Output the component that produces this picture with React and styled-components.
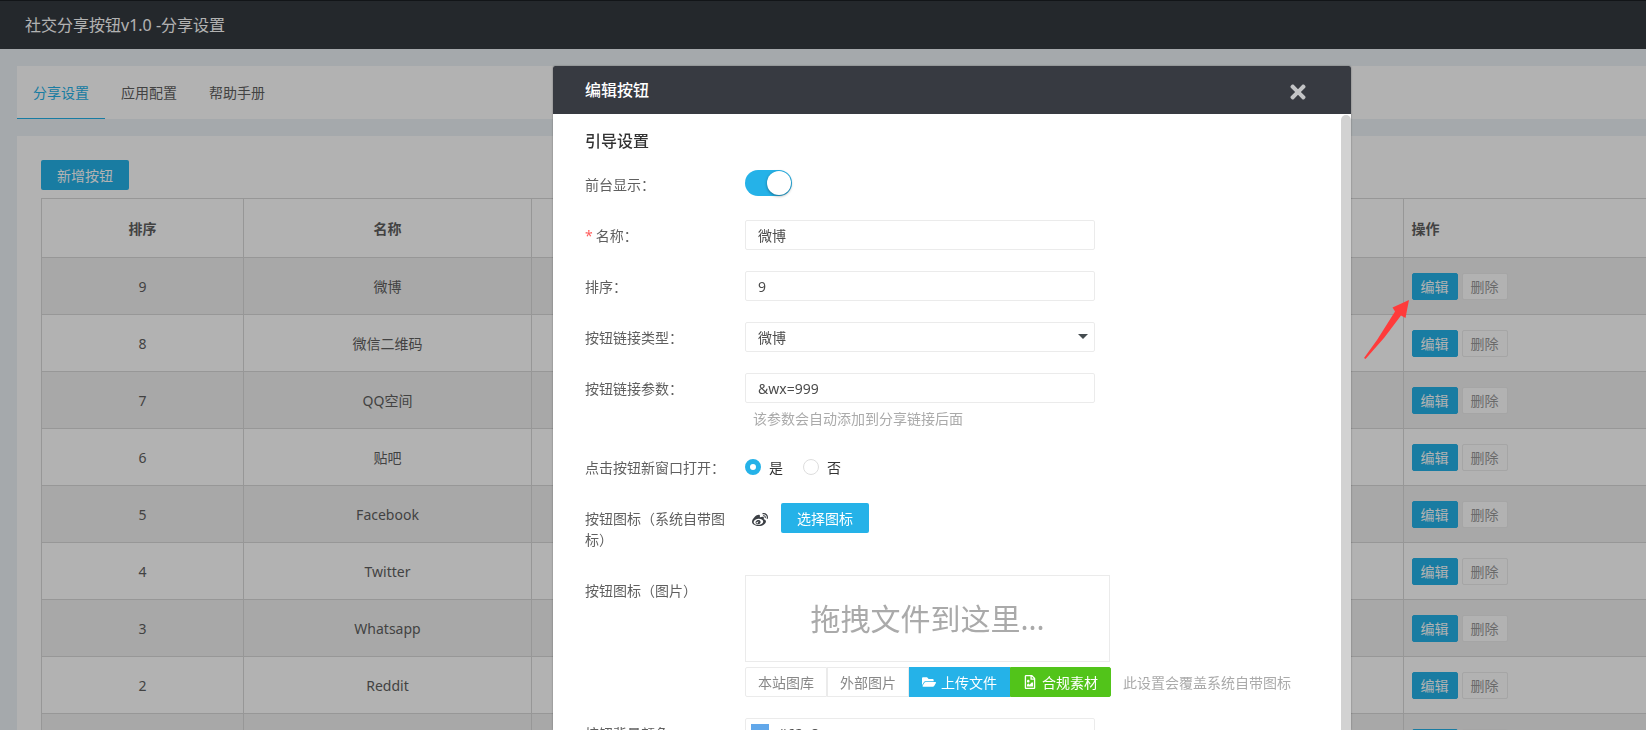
import React, { useState } from "react"
import styled, { createGlobalStyle } from "styled-components"
import { FaTimes, FaWeibo, FaFolderOpen, FaRegFileImage } from "react-icons/fa"

const GlobalStyle = createGlobalStyle`
  * {
    box-sizing: border-box;
  }

  body {
    margin: 0;
    overflow: hidden;
    background-color: #edf3f6;
    color: #5f5f5f;
    font-family: "Noto Sans", "Noto Sans CJK SC", sans-serif;
    font-size: 14px;
    line-height: 21px;
  }

  button,
  input,
  select {
    font-family: inherit;
    font-size: 14px;
  }
`

const Page = styled.div`
  height: 100vh;
  overflow: hidden;
`

const TopBar = styled.header`
  display: flex;
  align-items: center;
  height: 49px;
  padding: 0 25px;
  border-top: 1px solid #1b1f23;
  background-color: #343a40;
  color: #fff;
`

const TopTitle = styled.h1`
  margin: 0;
  font-size: 16px;
  font-weight: 400;
  line-height: 24px;
`

const Content = styled.main`
  padding: 17px 0 0 17px;
`

const Tabs = styled.nav`
  display: flex;
  height: 53px;
  margin-bottom: 17px;
  background-color: #fff;
`

const Tab = styled.a`
  display: flex;
  align-items: center;
  padding: 0 16px;
  border-bottom: 1px solid ${({ $active }) => ($active ? "#25b2e8" : "transparent")};
  color: ${({ $active }) => ($active ? "#25b2e8" : "#5f5f5f")};
  text-decoration: none;
`

const Card = styled.section`
  padding: 24px 0 24px 24px;
  background-color: #fff;
`

const Button = styled.button`
  height: 30px;
  padding: 0 16px;
  border: none;
  border-radius: 2px;
  background-color: #25b2e8;
  color: #fff;
  cursor: pointer;
`

const SmallButton = styled.button`
  height: 27px;
  padding: 0 8px;
  border: 1px solid ${({ $primary }) => ($primary ? "#25b2e8" : "#ececec")};
  border-radius: 2px;
  background-color: ${({ $primary }) => ($primary ? "#25b2e8" : "#fff")};
  color: ${({ $primary }) => ($primary ? "#fff" : "#999")};
  cursor: pointer;
`

const Table = styled.table`
  width: 100%;
  margin-top: 8px;
  border-collapse: collapse;
  table-layout: fixed;
`

const Col = styled.col`
  width: ${({ $width }) => $width || "auto"};
`

const Th = styled.th`
  height: 59px;
  padding: 0 8px;
  border: 1px solid #d8d8d8;
  border-right: none;
  font-weight: 700;
  text-align: ${({ $left }) => ($left ? "left" : "center")};
`

const Td = styled.td`
  height: 57px;
  padding: 0 8px;
  border: 1px solid #d8d8d8;
  border-right: none;
  text-align: center;
`

const Tr = styled.tr`
  &:nth-child(odd) {
    background-color: #f1f1f1;
  }
`

const Actions = styled.div`
  display: flex;
  gap: 4px;
`

const Overlay = styled.div`
  position: fixed;
  inset: 0;
  display: flex;
  justify-content: center;
  padding: 66px 0 0 258px;
  background-color: rgba(0, 0, 0, 0.3);
`

const Pointer = styled.svg`
  position: absolute;
  top: 300px;
  right: 237px;
`

const Modal = styled.section`
  display: flex;
  flex-direction: column;
  width: 798px;
  overflow: hidden;
  border-radius: 2px 2px 0 0;
  background-color: #fff;
  box-shadow: 0 0 2px rgba(0, 0, 0, 0.4);
`

const ModalHeader = styled.header`
  display: flex;
  flex-shrink: 0;
  align-items: center;
  justify-content: space-between;
  height: 48px;
  padding: 0 42px 0 32px;
  background-color: #373a41;
  color: #fff;
`

const ModalTitle = styled.h2`
  margin: 0;
  font-size: 16px;
  font-weight: 500;
  line-height: 24px;
`

const CloseButton = styled.button`
  display: flex;
  padding: 4px 0 0;
  border: none;
  background: none;
  color: #c3c4c6;
  cursor: pointer;
`

const ModalBody = styled.div`
  display: flex;
  flex: 1;
  min-height: 0;
  padding-top: 1px;
`

const Form = styled.form`
  flex: 1;
  padding: 14px 32px;
`

const ScrollBar = styled.div`
  width: 10px;
  border-radius: 5px 5px 0 0;
  background-color: #d2d2d2;
`

const SectionTitle = styled.h3`
  margin: 0 0 16px;
  color: #333;
  font-size: 16px;
  font-weight: 500;
  line-height: 24px;
`

const Row = styled.div`
  display: flex;
  align-items: flex-start;
  min-height: 30px;
  margin-bottom: 21px;
`

const Label = styled.label`
  flex-shrink: 0;
  width: 160px;
  padding: 5px 15px 4px 0;
`

const Required = styled.span`
  margin-right: 3px;
  color: #ff5c5c;
`

const Field = styled.div`
  flex: 1;
`

const Line = styled.div`
  display: flex;
  align-items: center;
  min-height: 30px;
`

const Input = styled.input`
  display: block;
  width: 350px;
  height: 30px;
  padding: 0 12px;
  border: 1px solid #ebebeb;
  border-radius: 2px;
  outline: none;
  background-color: #fff;
  color: #4c4c4c;
`

const SelectBox = styled.div`
  position: relative;
  width: 350px;

  &::after {
    content: "";
    position: absolute;
    top: 12px;
    right: 7px;
    border: 5px solid transparent;
    border-top-color: #454c50;
    border-bottom: none;
    pointer-events: none;
  }
`

const Select = styled.select`
  display: block;
  width: 100%;
  height: 30px;
  padding: 0 12px;
  border: 1px solid #ebebeb;
  border-radius: 2px;
  outline: none;
  background-color: #fff;
  color: #4c4c4c;
  appearance: none;
`

const Hint = styled.p`
  margin: 5px 8px 2px;
  color: #aaa;
`

const SideHint = styled.span`
  margin-left: 12px;
  color: #aaa;
`

const Switch = styled.input`
  display: block;
  width: 47px;
  height: 26px;
  margin: 1px 0 0;
  padding: 1px;
  border-radius: 13px;
  background-color: ${({ checked }) => (checked ? "#25b2e8" : "#ddd")};
  appearance: none;
  cursor: pointer;

  &::before {
    content: "";
    display: block;
    width: 24px;
    height: 24px;
    margin-left: ${({ checked }) => (checked ? "21px" : "0")};
    border-radius: 50%;
    background-color: #fff;
    box-shadow: 0 1px 3px rgba(0, 0, 0, 0.4);
  }
`

const RadioLabel = styled.label`
  display: flex;
  align-items: center;
  gap: 8px;
  margin-right: 20px;
  color: #333;
`

const Radio = styled.input`
  width: 16px;
  height: 16px;
  margin: 0;
  border: 1px solid #ddd;
  border-radius: 50%;
  background-color: #fff;
  appearance: none;

  &:checked {
    border: 5px solid #25b2e8;
  }
`

const IconPreview = styled.span`
  display: flex;
  margin: 4px 13px 0 7px;
  color: #3b3f44;
`

const DropZone = styled.div`
  display: flex;
  align-items: center;
  justify-content: center;
  width: 365px;
  height: 87px;
  margin-bottom: 5px;
  border: 1px solid #ebebeb;
  color: #aaa;
  font-size: 30px;
  line-height: 45px;
`

const UploadButton = styled.button`
  display: flex;
  align-items: center;
  gap: 5px;
  height: 30px;
  padding: 0 12px;
  border: 1px solid ${({ $color }) => $color || "#ebebeb"};
  background-color: ${({ $color }) => $color || "#fff"};
  color: ${({ $color }) => ($color ? "#fff" : "#888")};
  cursor: pointer;

  & + & {
    margin-left: ${({ $color }) => ($color ? "0" : "-1px")};
  }

  &:first-child {
    border-radius: 2px 0 0 2px;
  }

  &:nth-child(4) {
    border-radius: 0 2px 2px 0;
  }
`

const ColorBox = styled.div`
  display: flex;
  align-items: center;
  gap: 9px;
  width: 350px;
  height: 30px;
  padding: 0 5px;
  border: 1px solid #ebebeb;
  border-radius: 2px;
`

const Swatch = styled.span`
  width: 18px;
  height: 18px;
  background-color: #62a8ea;
`

const ColorInput = styled.input`
  flex: 1;
  padding: 0;
  border: none;
  outline: none;
  color: #4c4c4c;
`

const tabs = ["分享设置", "应用配置", "帮助手册"]

const rows = [
  { sort: 9, name: "微博" },
  { sort: 8, name: "微信二维码" },
  { sort: 7, name: "QQ空间" },
  { sort: 6, name: "贴吧" },
  { sort: 5, name: "Facebook" },
  { sort: 4, name: "Twitter" },
  { sort: 3, name: "Whatsapp" },
  { sort: 2, name: "Reddit" },
  { sort: 1, name: "" },
]

const ButtonTable = () => (
  <Table>
    <colgroup>
      <Col $width="202px" />
      <Col $width="288px" />
      <Col />
      <Col $width="243px" />
    </colgroup>
    <thead>
      <tr>
        <Th>排序</Th>
        <Th>名称</Th>
        <Th />
        <Th $left>操作</Th>
      </tr>
    </thead>
    <tbody>
      {rows.map(({ sort, name }) => (
        <Tr key={sort}>
          <Td>{sort}</Td>
          <Td>{name}</Td>
          <Td />
          <Td>
            <Actions>
              <SmallButton $primary>编辑</SmallButton>
              <SmallButton>删除</SmallButton>
            </Actions>
          </Td>
        </Tr>
      ))}
    </tbody>
  </Table>
)

const EditModal = () => {
  const [visible, setVisible] = useState(true)

  return (
    <Modal role="dialog" aria-labelledby="modal-title">
      <ModalHeader>
        <ModalTitle id="modal-title">编辑按钮</ModalTitle>
        <CloseButton type="button" aria-label="关闭">
          <FaTimes size={22} />
        </CloseButton>
      </ModalHeader>
      <ModalBody>
        <Form>
          <SectionTitle>引导设置</SectionTitle>
          <Row>
            <Label htmlFor="visible">前台显示：</Label>
            <Switch
              id="visible"
              type="checkbox"
              checked={visible}
              onChange={(e) => setVisible(e.target.checked)}
            />
          </Row>
          <Row>
            <Label htmlFor="name">
              <Required>*</Required>名称：
            </Label>
            <Input id="name" defaultValue="微博" />
          </Row>
          <Row>
            <Label htmlFor="sort">排序：</Label>
            <Input id="sort" defaultValue="9" />
          </Row>
          <Row>
            <Label htmlFor="type">按钮链接类型：</Label>
            <SelectBox>
              <Select id="type" defaultValue="weibo">
                <option value="weibo">微博</option>
              </Select>
            </SelectBox>
          </Row>
          <Row>
            <Label htmlFor="params">按钮链接参数：</Label>
            <Field>
              <Input id="params" defaultValue="&wx=999" />
              <Hint>该参数会自动添加到分享链接后面</Hint>
            </Field>
          </Row>
          <Row>
            <Label as="span">点击按钮新窗口打开：</Label>
            <Line>
              <RadioLabel>
                <Radio type="radio" name="blank" defaultChecked />是
              </RadioLabel>
              <RadioLabel>
                <Radio type="radio" name="blank" />否
              </RadioLabel>
            </Line>
          </Row>
          <Row>
            <Label as="span">按钮图标（系统自带图标）</Label>
            <Line>
              <IconPreview>
                <FaWeibo size={16} />
              </IconPreview>
              <Button type="button">选择图标</Button>
            </Line>
          </Row>
          <Row>
            <Label as="span">按钮图标（图片）</Label>
            <Field>
              <DropZone>拖拽文件到这里...</DropZone>
              <Line>
                <UploadButton type="button">本站图库</UploadButton>
                <UploadButton type="button">外部图片</UploadButton>
                <UploadButton type="button" $color="#25b2e8">
                  <FaFolderOpen size={14} />
                  上传文件
                </UploadButton>
                <UploadButton type="button" $color="#52c41a">
                  <FaRegFileImage size={14} />
                  合规素材
                </UploadButton>
                <SideHint>此设置会覆盖系统自带图标</SideHint>
              </Line>
            </Field>
          </Row>
          <Row>
            <Label htmlFor="color">按钮背景颜色：</Label>
            <ColorBox>
              <Swatch />
              <ColorInput id="color" defaultValue="#62a8ea" />
            </ColorBox>
          </Row>
        </Form>
        <ScrollBar />
      </ModalBody>
    </Modal>
  )
}

const App = () => (
  <>
    <GlobalStyle />
    <Page>
      <TopBar>
        <TopTitle>社交分享按钮v1.0 -分享设置</TopTitle>
      </TopBar>
      <Content>
        <Tabs>
          {tabs.map((tab, i) => (
            <Tab key={tab} href="#" $active={i === 0}>
              {tab}
            </Tab>
          ))}
        </Tabs>
        <Card>
          <Button type="button">新增按钮</Button>
          <ButtonTable />
        </Card>
      </Content>
    </Page>
    <Overlay>
      <EditModal />
      <Pointer width="45" height="59" viewBox="0 0 45 59" aria-hidden="true">
        <path d="M45 0L28.500 7.500L31 11.500L13 40L0 58L1.500 59L20 38L37 15.500L41.500 18Z" fill="#ff3b3b" />
      </Pointer>
    </Overlay>
  </>
)

export default App
